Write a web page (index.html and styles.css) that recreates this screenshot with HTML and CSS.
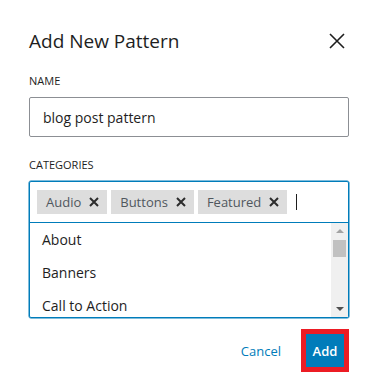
FILE: index.html
```html
<!DOCTYPE html>
<html lang="en">
<head>
    <meta charset="UTF-8">
    <meta name="viewport" content="width=device-width, initial-scale=1.0">
    <title>Add New Pattern</title>
    <link rel="stylesheet" href="styles.css">
</head>
<body>
    <div class="modal">
        <div class="modal-header">
            <h1>Add New Pattern</h1>
            <button class="close-btn" aria-label="Close">
                <svg width="16" height="16" viewBox="0 0 16 16">
                    <path d="M1 1 L15 15 M15 1 L1 15" stroke="#1e1e1e" stroke-width="1.6" fill="none"/>
                </svg>
            </button>
        </div>

        <label class="field-label" for="patternName">Name</label>
        <input class="text-input" id="patternName" type="text" value="blog post pattern">

        <label class="field-label">Categories</label>
        <div class="token-field">
            <div class="token-row">
                <span class="token"><span>Audio</span><span class="token-remove">
                    <svg width="10" height="10" viewBox="0 0 10 10"><path d="M1 1 L9 9 M9 1 L1 9" stroke="#2c2c2c" stroke-width="2" fill="none"/></svg>
                </span></span>
                <span class="token"><span>Buttons</span><span class="token-remove">
                    <svg width="10" height="10" viewBox="0 0 10 10"><path d="M1 1 L9 9 M9 1 L1 9" stroke="#2c2c2c" stroke-width="2" fill="none"/></svg>
                </span></span>
                <span class="token"><span>Featured</span><span class="token-remove">
                    <svg width="10" height="10" viewBox="0 0 10 10"><path d="M1 1 L9 9 M9 1 L1 9" stroke="#2c2c2c" stroke-width="2" fill="none"/></svg>
                </span></span>
                <span class="caret"></span>
            </div>
            <div class="suggestions">
                <ul class="suggestion-list">
                    <li>About</li>
                    <li>Banners</li>
                    <li>Call to Action</li>
                </ul>
                <div class="scrollbar">
                    <span class="arrow-up"></span>
                    <span class="thumb"></span>
                    <span class="arrow-down"></span>
                </div>
            </div>
        </div>

        <div class="modal-footer">
            <button class="btn-link">Cancel</button>
            <button class="btn-primary">Add</button>
        </div>
    </div>
</body>
</html>
```

FILE: styles.css
```css
* {
    margin: 0;
    padding: 0;
    box-sizing: border-box;
}

body {
    font-family: 'Open Sans', 'Noto Sans', sans-serif;
    background: #ffffff;
    color: #1e1e1e;
}

.modal {
    width: 376px;
    height: 384px;
    padding: 26px 27px 0 29px;
}

.modal-header {
    display: flex;
    align-items: center;
    justify-content: space-between;
    height: 30px;
}

.modal-header h1 {
    font-size: 19px;
    font-weight: 400;
    line-height: 30px;
    color: #1e1e1e;
}

.close-btn {
    background: none;
    border: none;
    width: 16px;
    height: 16px;
    margin-right: 4px;
    display: flex;
    cursor: pointer;
}

.field-label {
    display: block;
    font-size: 11px;
    line-height: 16px;
    text-transform: uppercase;
    color: #1e1e1e;
    margin-top: 17px;
    margin-bottom: 8px;
}

.text-input {
    display: block;
    width: 100%;
    height: 40px;
    padding: 0 13px;
    border: 1px solid #8c8f94;
    border-radius: 2px;
    font-family: inherit;
    font-size: 14px;
    color: #1e1e1e;
}

.text-input + .field-label {
    margin-top: 20px;
}

.token-field {
    border: 1px solid #007cba;
    border-radius: 2px;
    box-shadow: 0 0 0 0.5px #007cba;
}

.token-row {
    display: flex;
    align-items: center;
    gap: 4px;
    height: 41px;
    padding: 0 7px;
    border-bottom: 1px solid #007cba;
}

.token {
    display: flex;
    align-items: center;
    gap: 8px;
    height: 24px;
    padding: 0 8px 0 9px;
    background: #dddddd;
    font-size: 13px;
    color: #50575e;
}

.token-remove {
    display: flex;
}

.caret {
    width: 1px;
    height: 16px;
    background: #1e1e1e;
    margin-left: 5px;
}

.suggestions {
    display: flex;
    height: 94px;
}

.suggestion-list {
    flex: 1;
    list-style: none;
    overflow: hidden;
}

.suggestion-list li {
    height: 33px;
    line-height: 33px;
    padding-left: 12px;
    font-size: 14px;
    color: #1e1e1e;
}

.scrollbar {
    width: 17px;
    background: #f0f0f0;
    display: flex;
    flex-direction: column;
    align-items: center;
    padding: 6px 0;
}

.arrow-up {
    width: 0;
    height: 0;
    border-left: 4px solid transparent;
    border-right: 4px solid transparent;
    border-bottom: 4px solid #a3a3a3;
}

.thumb {
    width: 13px;
    height: 17px;
    background: #c1c1c1;
    margin-top: 7px;
}

.arrow-down {
    width: 0;
    height: 0;
    border-left: 4px solid transparent;
    border-right: 4px solid transparent;
    border-top: 4px solid #505050;
    margin-top: auto;
}

.modal-footer {
    display: flex;
    justify-content: flex-end;
    align-items: center;
    gap: 20px;
    margin-top: 11px;
}

.btn-link {
    background: none;
    border: none;
    font-family: inherit;
    font-size: 13px;
    color: #007cba;
    cursor: pointer;
}

.btn-primary {
    width: 48px;
    height: 43px;
    background: #007cba;
    border: 5px solid #ec1c24;
    color: #ffffff;
    font-family: inherit;
    font-size: 13px;
    font-weight: 600;
    cursor: pointer;
}
```
